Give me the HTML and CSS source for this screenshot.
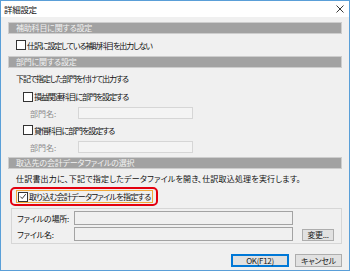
FILE: index.html
```html
<!DOCTYPE html>
<html lang="ja">
<head>
<meta charset="utf-8">
<link rel="stylesheet" href="styles.css">
</head>
<body>
<div class="window">
  <div class="titlebar">
    <span class="title">詳細設定</span>
    <svg class="close" width="8" height="8" viewBox="0 0 8 8"><path d="M0.5 0.5 L7.5 7.5 M7.5 0.5 L0.5 7.5" stroke="#222" stroke-width="0.9" fill="none"/></svg>
  </div>
  <div class="content">
    <div class="section-head">補助科目に関する設定</div>
    <div class="row row-check1"><span class="cb"></span><span class="lbl">仕訳に設定している補助科目を出力しない</span></div>

    <div class="section-head">部門に関する設定</div>
    <div class="row row-text">下記で指定した部門を付けて出力する</div>
    <div class="row row-sub"><span class="cb"></span><span class="lbl">損益関連科目に部門を設定する</span></div>
    <div class="row row-dept"><span class="dim">部門名:</span><span class="input disabled"></span></div>
    <div class="row row-sub2"><span class="cb"></span><span class="lbl">貸借科目に部門を設定する</span></div>
    <div class="row row-dept"><span class="dim">部門名:</span><span class="input disabled"></span></div>

    <div class="section-head">取込先の会計データファイルの選択</div>
    <div class="row row-text2">仕訳書出力に、下記で指定したデータファイルを開き、仕訳取込処理を実行します。</div>
    <div class="highlight">
      <div class="focus">
        <span class="cb checked"><svg width="9" height="9" viewBox="0 0 9 9"><path d="M1.5 4.6 L3.6 6.8 L7.6 1.8" stroke="#222" stroke-width="1" fill="none"/></svg></span>
        <span class="lbl hl">取り込む会計データファイルを指定する</span>
      </div>
    </div>
    <div class="group">
      <div class="grow"><span class="glbl">ファイルの場所:</span><span class="input file"></span></div>
      <div class="grow"><span class="glbl">ファイル名:</span><span class="input file"></span><button class="btn small">変更...</button></div>
    </div>
    <div class="actions">
      <button class="btn ok">OK(F12)</button>
      <button class="btn cancel">キャンセル</button>
    </div>
  </div>
</div>
</body>
</html>
```

FILE: styles.css
```css
html, body {
  margin: 0;
  padding: 0;
}
body {
  width: 350px;
  height: 271px;
  overflow: hidden;
  font-family: "Noto Sans CJK JP", "Noto Sans", sans-serif;
  font-size: 8px;
  font-feature-settings: "palt";
  color: #111;
  background: #f0f0f0;
}
.window {
  box-sizing: border-box;
  width: 350px;
  height: 271px;
  border: 1px solid #5a9fd8;
  background: #f0f0f0;
  display: flex;
  flex-direction: column;
}
.titlebar {
  height: 16px;
  background: #ffffff;
  display: flex;
  align-items: center;
  justify-content: space-between;
  padding: 0 4px 0 3px;
  flex: none;
}
.title {
  font-size: 8.5px;
  letter-spacing: -0.3px;
  color: #111;
}
.close {
  display: block;
  margin-right: 1px;
}
.content {
  padding: 5px 7px 0 7px;
  display: flex;
  flex-direction: column;
}
.section-head {
  box-sizing: border-box;
  height: 12px;
  background: #a2a2a2;
  border: 1px solid #cdcdcd;
  color: #f2f2f2;
  padding-left: 7px;
  line-height: 10px;
  font-size: 8px;
  letter-spacing: -0.2px;
}
.row {
  display: flex;
  align-items: center;
  white-space: nowrap;
  letter-spacing: -1.1px;
}
.cb {
  box-sizing: border-box;
  width: 10px;
  height: 10px;
  border: 1px solid #333;
  background: #fff;
  flex: none;
  margin-right: 1px;
  display: flex;
  align-items: center;
  justify-content: center;
}
.cb svg { display: block; }
.row-check1 {
  height: 22px;
  padding-left: 8px;
}
.row-text {
  height: 21px;
  padding-left: 8px;
}
.row-sub {
  height: 15px;
  padding-left: 15px;
}
.row-sub2 {
  height: 16px;
  padding-left: 15px;
}
.row-dept {
  height: 18px;
  padding-left: 22px;
}
.dim {
  color: #8c8c8c;
  width: 48px;
  flex: none;
  letter-spacing: 0;
}
.input {
  box-sizing: border-box;
  display: block;
  height: 12px;
  flex: none;
}
.input.disabled {
  width: 115px;
  background: #f4f4f4;
  border: 1px solid #d6d6d6;
}
.row-dept + .section-head {
  margin-top: 1px;
}
.row-text2 {
  height: 18px;
  padding-left: 8px;
  letter-spacing: 0.2px;
}
.highlight {
  box-sizing: border-box;
  align-self: flex-start;
  margin-left: 2px;
  width: 148px;
  height: 19px;
  border: 2.5px solid #e3000f;
  border-radius: 5px;
  display: flex;
  align-items: center;
  padding-left: 4px;
}
.focus {
  box-sizing: border-box;
  display: flex;
  align-items: center;
  height: 13px;
  width: 137px;
  border: 1px solid #f2a93b;
  padding-left: 1px;
  white-space: nowrap;
}
.lbl.hl {
  letter-spacing: -0.7px;
}
.group {
  box-sizing: border-box;
  margin: 2px 0 0 3px;
  height: 36px;
  border: 1px solid #d6d6d6;
  padding: 2px 0 0 5px;
  display: flex;
  flex-direction: column;
  gap: 2px;
}
.grow {
  display: flex;
  align-items: center;
  height: 14px;
  white-space: nowrap;
}
.glbl {
  width: 57px;
  flex: none;
  letter-spacing: -0.2px;
}
.input.file {
  width: 219px;
  height: 14px;
  background: #f0f0f0;
  border: 1px solid #a3a3a3;
}
.btn {
  box-sizing: border-box;
  font-family: inherit;
  font-size: 8px;
  font-feature-settings: "palt";
  color: #1a1a1a;
  background: #e1e1e1;
  border: 1px solid #adadad;
  padding: 0;
  margin: 0;
  line-height: 1;
  letter-spacing: -0.3px;
}
.btn.small {
  width: 32px;
  height: 12px;
  margin-left: 9px;
  margin-top: 2px;
}
.actions {
  display: flex;
  justify-content: flex-end;
  gap: 6px;
  margin-top: 10px;
}
.btn.ok {
  width: 58px;
  height: 13px;
  border: 1px solid #0078d7;
  box-shadow: inset 0 0 0 1px #0078d7;
}
.btn.cancel {
  width: 47px;
  height: 13px;
}
```
